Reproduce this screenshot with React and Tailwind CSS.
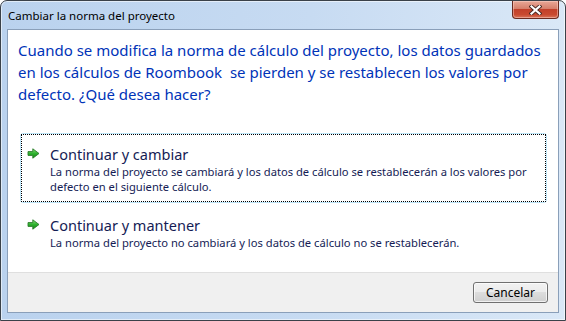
import React from "react";

const font = { fontFamily: '"Segoe UI", "Noto Sans", sans-serif' };

function GreenArrow() {
  return (
    <svg width="13" height="11" viewBox="0 0 13 11" className="shrink-0">
      <defs>
        <linearGradient id="ga" x1="0" y1="0" x2="0" y2="1">
          <stop offset="0" stopColor="#8be27a" />
          <stop offset="0.5" stopColor="#2fb22f" />
          <stop offset="1" stopColor="#138a13" />
        </linearGradient>
      </defs>
      <path
        d="M1 3.6 H5.8 V0.8 L12 5.5 L5.8 10.2 V7.4 H1 Z"
        fill="url(#ga)"
        stroke="#2a7a2a"
        strokeWidth="0.9"
        strokeLinejoin="round"
      />
    </svg>
  );
}

function CloseX() {
  return (
    <svg width="13" height="10" viewBox="0 0 13 10">
      <path d="M2.5 1.5 L10.5 8.5 M10.5 1.5 L2.5 8.5" stroke="#4a2a24" strokeWidth="4" strokeLinecap="square" />
      <path d="M2.5 1.5 L10.5 8.5 M10.5 1.5 L2.5 8.5" stroke="#ffffff" strokeWidth="2.2" strokeLinecap="square" />
    </svg>
  );
}

function CommandLink({ title, lines, focused }) {
  return (
    <div
      className={`rounded-[3px] border ${
        focused ? "border-[#bfe6f8]" : "border-transparent"
      }`}
    >
      <div
        className={`border border-dotted ${
          focused ? "border-black" : "border-transparent"
        } pt-[9px] pb-[7px] pl-[5px] flex gap-[10px]`}
      >
        <div className="pt-[4px]">
          <GreenArrow />
        </div>
        <div className="text-[#151c55]">
          <div className="text-[14.5px] leading-[20px]">{title}</div>
          <div className="text-[11.2px] leading-[15px] whitespace-nowrap">
            {lines.map((l, i) => (
              <div key={i}>{l}</div>
            ))}
          </div>
        </div>
      </div>
    </div>
  );
}

export default function App() {
  return (
    <div
      className="w-[566px] h-[321px] flex flex-col rounded-t-[7px] border border-[#3a4149] bg-[linear-gradient(to_right,#bad2ee,#c7dbf2_55%,#dae8f7)] shadow-[inset_0_0_0_1px_rgba(255,255,255,0.55)] overflow-hidden"
      style={font}
    >
      {/* title bar */}
      <div className="h-[28px] flex shrink-0">
        <div className="pl-[7px] flex items-center text-[11.5px] text-black pt-[2px]">
          Cambiar la norma del proyecto
        </div>
        <button className="ml-auto mr-[6px] mt-0 w-[47px] h-[18px] rounded-b-[4px] border border-t-0 border-[#6a2b20] bg-[linear-gradient(to_bottom,#e9a897,#d6806c_45%,#c2402a_50%,#c94a30_80%,#d9745a)] flex items-center justify-center shadow-[inset_0_0_0_1px_rgba(255,220,210,0.45)]">
          <CloseX />
        </button>
      </div>

      {/* client area */}
      <div className="flex-1 mx-[6px] mb-[7px] border border-[#8a9fb9] bg-white flex flex-col">
        <div className="flex-1 pt-[9px] px-[10px]">
          <p className="text-[15px] leading-[22px] text-[#0033b8] whitespace-nowrap">
            Cuando se modifica la norma de cálculo del proyecto, los datos guardados
            <br />
            en los cálculos de Roombook{"\u00a0"} se pierden y se restablecen los valores por
            <br />
            defecto. ¿Qué desea hacer?
          </p>
          <div className="mt-[28px] ml-[2px] mr-[1px] flex flex-col gap-[1px]">
            <CommandLink
              focused
              title="Continuar y cambiar"
              lines={[
                "La norma del proyecto se cambiará y los datos de cálculo se restablecerán a los valores por",
                "defecto en el siguiente cálculo.",
              ]}
            />
            <CommandLink
              title="Continuar y mantener"
              lines={[
                "La norma del proyecto no cambiará y los datos de cálculo no se restablecerán.",
              ]}
            />
          </div>
        </div>
        <div className="h-[40px] shrink-0 border-t border-[#dfdfdf] bg-[#f0f0f0] flex items-center justify-end pr-[10px]">
          <button className="w-[75px] h-[21px] rounded-[3px] border border-[#707070] bg-[linear-gradient(to_bottom,#f2f2f2,#ebebeb_50%,#dddddd_50%,#cfcfcf)] text-[12px] text-black shadow-[inset_0_0_0_1px_rgba(255,255,255,0.7)]">
            Cancelar
          </button>
        </div>
      </div>
    </div>
  );
}
